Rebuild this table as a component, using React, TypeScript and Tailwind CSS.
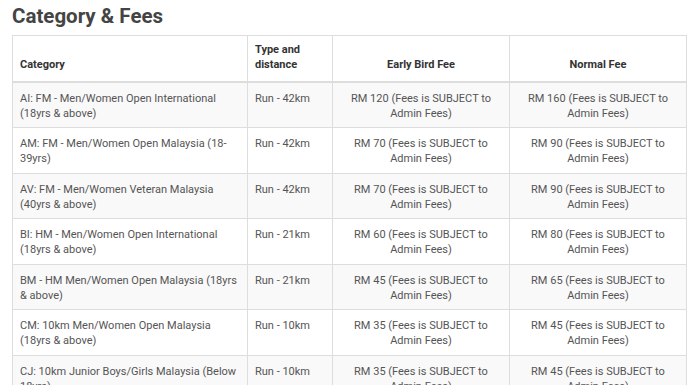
import React from "react";

const rows = [
  ["AI: FM - Men/Women Open International (18yrs & above)", "Run - 42km", "RM 120", "RM 160"],
  ["AM: FM - Men/Women Open Malaysia (18-39yrs)", "Run - 42km", "RM 70", "RM 90"],
  ["AV: FM - Men/Women Veteran Malaysia (40yrs & above)", "Run - 42km", "RM 70", "RM 90"],
  ["BI: HM - Men/Women Open International (18yrs & above)", "Run - 21km", "RM 60", "RM 80"],
  ["BM - HM Men/Women Open Malaysia (18yrs & above)", "Run - 21km", "RM 45", "RM 65"],
  ["CM: 10km Men/Women Open Malaysia (18yrs & above)", "Run - 10km", "RM 35", "RM 45"],
  ["CJ: 10km Junior Boys/Girls Malaysia (Below 18yrs)", "Run - 10km", "RM 35", "RM 45"],
];

export default function App() {
  return (
    <div className="w-[696px] h-[385px] overflow-hidden bg-white pl-[12px] pr-[10px]" style={{ fontFamily: "Roboto, 'Liberation Sans', sans-serif" }}>
      <h2 className="text-[20.5px] font-bold text-[#444] leading-[28px] pt-[2px] mb-[5px]">Category &amp; Fees</h2>
      <table className="w-[674px] table-fixed border-collapse text-[11px] leading-[15.25px] text-[#555]">
        <colgroup>
          <col className="w-[235px]" />
          <col className="w-[85px]" />
          <col className="w-[177px]" />
          <col className="w-[177px]" />
        </colgroup>
        <thead>
          <tr className="h-[46px]">
            <th className="border border-[#ddd] border-b-2 px-[7px] pb-[8px] align-bottom text-left font-bold text-[#333]">Category</th>
            <th className="border border-[#ddd] border-b-2 px-[7px] pb-[8px] align-bottom text-left font-bold text-[#333]">Type and distance</th>
            <th className="border border-[#ddd] border-b-2 px-[7px] pb-[8px] align-bottom text-center font-bold text-[#333]">Early Bird Fee</th>
            <th className="border border-[#ddd] border-b-2 px-[7px] pb-[8px] align-bottom text-center font-bold text-[#333]">Normal Fee</th>
          </tr>
        </thead>
        <tbody>
          {rows.map((r, i) => (
            <tr key={i} className={i % 2 === 0 ? "bg-[#f9f9f9]" : "bg-white"}>
              <td className="border border-[#ddd] px-[7px] pt-[8px] pb-[6px] align-top">{r[0]}</td>
              <td className="border border-[#ddd] px-[7px] pt-[8px] pb-[6px] align-top">{r[1]}</td>
              <td className="border border-[#ddd] px-[7px] pt-[8px] pb-[6px] align-top text-center">{r[2]} (Fees is SUBJECT to Admin Fees)</td>
              <td className="border border-[#ddd] px-[7px] pt-[8px] pb-[6px] align-top text-center">{r[3]} (Fees is SUBJECT to Admin Fees)</td>
            </tr>
          ))}
        </tbody>
      </table>
    </div>
  );
}
